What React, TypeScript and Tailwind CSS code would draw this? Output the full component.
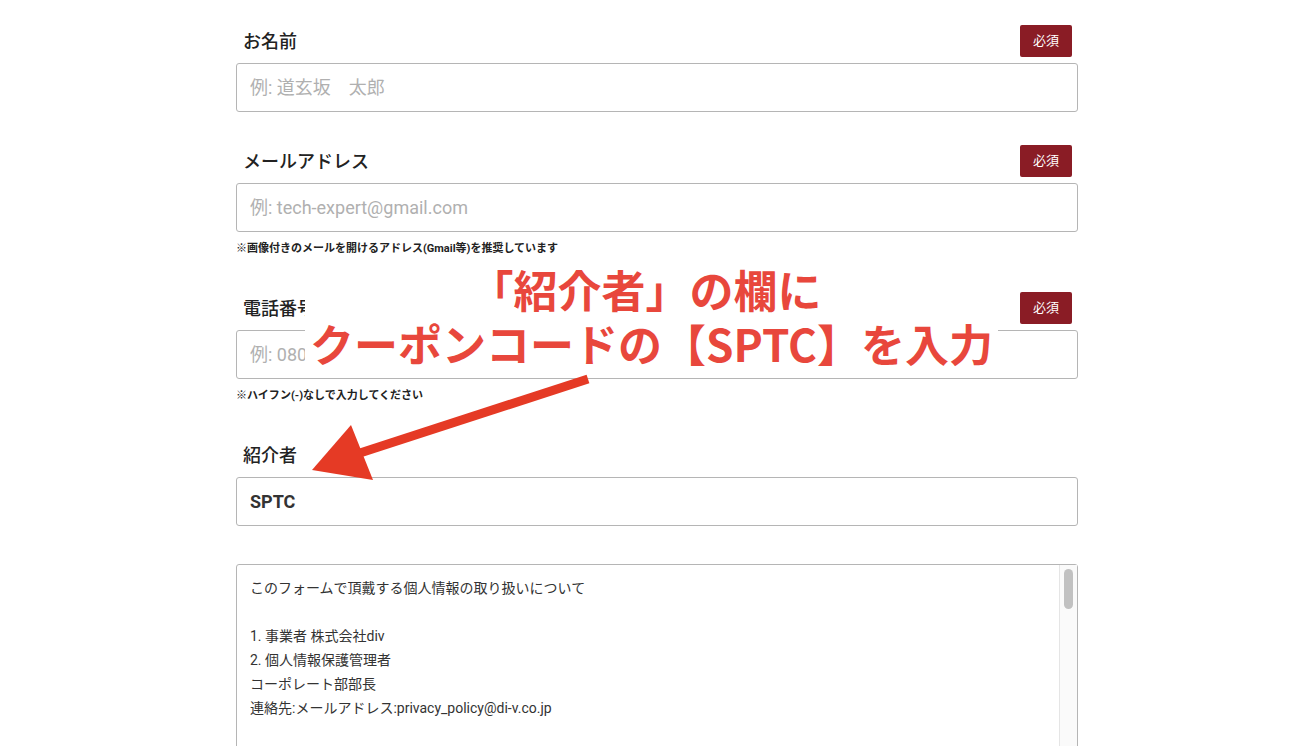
import React from "react";

const font = { fontFamily: '"Roboto","Noto Sans CJK JP",sans-serif' };

function Badge() {
  return <span className="bg-[#8a1c25] text-white text-[13px] w-[52px] h-[32px] flex items-center justify-center rounded-[2px]">必須</span>;
}

function Field({ label, placeholder, required, note, value, top }: { label: string; placeholder?: string; required?: boolean; note?: string; value?: string; top: string }) {
  return (
    <div className={top}>
      <div className="flex items-end justify-between h-[38px] pb-[6px]">
        <span className="text-[18px] font-medium text-[#222] pl-[7px] leading-none mb-[6px]">{label}</span>
        {required && <span className="mr-[6px]"><Badge /></span>}
      </div>
      <div className="h-[49px] border border-[#b5b5b5] rounded-[3px] flex items-center px-[13px] text-[18px]">
        {value ? <span className="font-bold text-[#333]">{value}</span> : <span className="text-[#b0b0b0]">{placeholder}</span>}
      </div>
      {note && <div className="text-[11px] font-bold text-[#222] mt-[9px]">{note}</div>}
    </div>
  );
}

export default function App() {
  const lines = ["このフォームで頂戴する個人情報の取り扱いについて", "", "1. 事業者 株式会社div", "2. 個人情報保護管理者", "コーポレート部部長", "連絡先:メールアドレス:privacy_policy@di-v.co.jp", "", "3. 個人情報の利用目的"];
  return (
    <div className="relative w-[1300px] h-[746px] overflow-hidden bg-white" style={font}>
      <div className="w-[842px] ml-[236px] pt-[25px]">
        <Field top="" label="お名前" placeholder="例: 道玄坂　太郎" required />
        <Field top="mt-[33px]" label="メールアドレス" placeholder="例: tech-expert@gmail.com" required note="※画像付きのメールを開けるアドレス(Gmail等)を推奨しています" />
        <Field top="mt-[34px]" label="電話番号" placeholder="例: 080-1234-5678" required note="※ハイフン(-)なしで入力してください" />
        <Field top="mt-[35px]" label="紹介者" value="SPTC" />
        <div className="mt-[38px] h-[200px] border border-[#b5b5b5] rounded-t-[3px] flex">
          <div className="flex-1 pl-[13px] pt-[11px] text-[14px] text-[#333] leading-[24px]">
            {lines.map((l, i) => <div key={i} className="h-[24px]">{l}</div>)}
          </div>
          <div className="w-[18px] border-l border-[#e5e5e5] bg-[#fafafa] pt-[4px] flex justify-center">
            <div className="w-[9px] h-[40px] rounded-full bg-[#c1c1c1]" />
          </div>
        </div>
      </div>
      <div className="absolute left-[305px] top-[272px] w-[693px] h-[100px] bg-white" />
      <div className="absolute left-[295px] top-[262px] w-[713px] text-center text-[#e8473c] font-bold text-[44px] leading-[54px]" style={{ fontFamily: '"Noto Sans CJK JP",sans-serif' }}>
        <div className="pr-[12px]">「紹介者」の欄に</div>
        <div>クーポンコードの【SPTC】を入力</div>
      </div>
      <svg className="absolute left-0 top-0" width="1300" height="746">
        <line x1="588" y1="379" x2="360" y2="453" stroke="#e53a25" strokeWidth="9" />
        <polygon points="312,470 351,425 373,480" fill="#e53a25" />
      </svg>
    </div>
  );
}
